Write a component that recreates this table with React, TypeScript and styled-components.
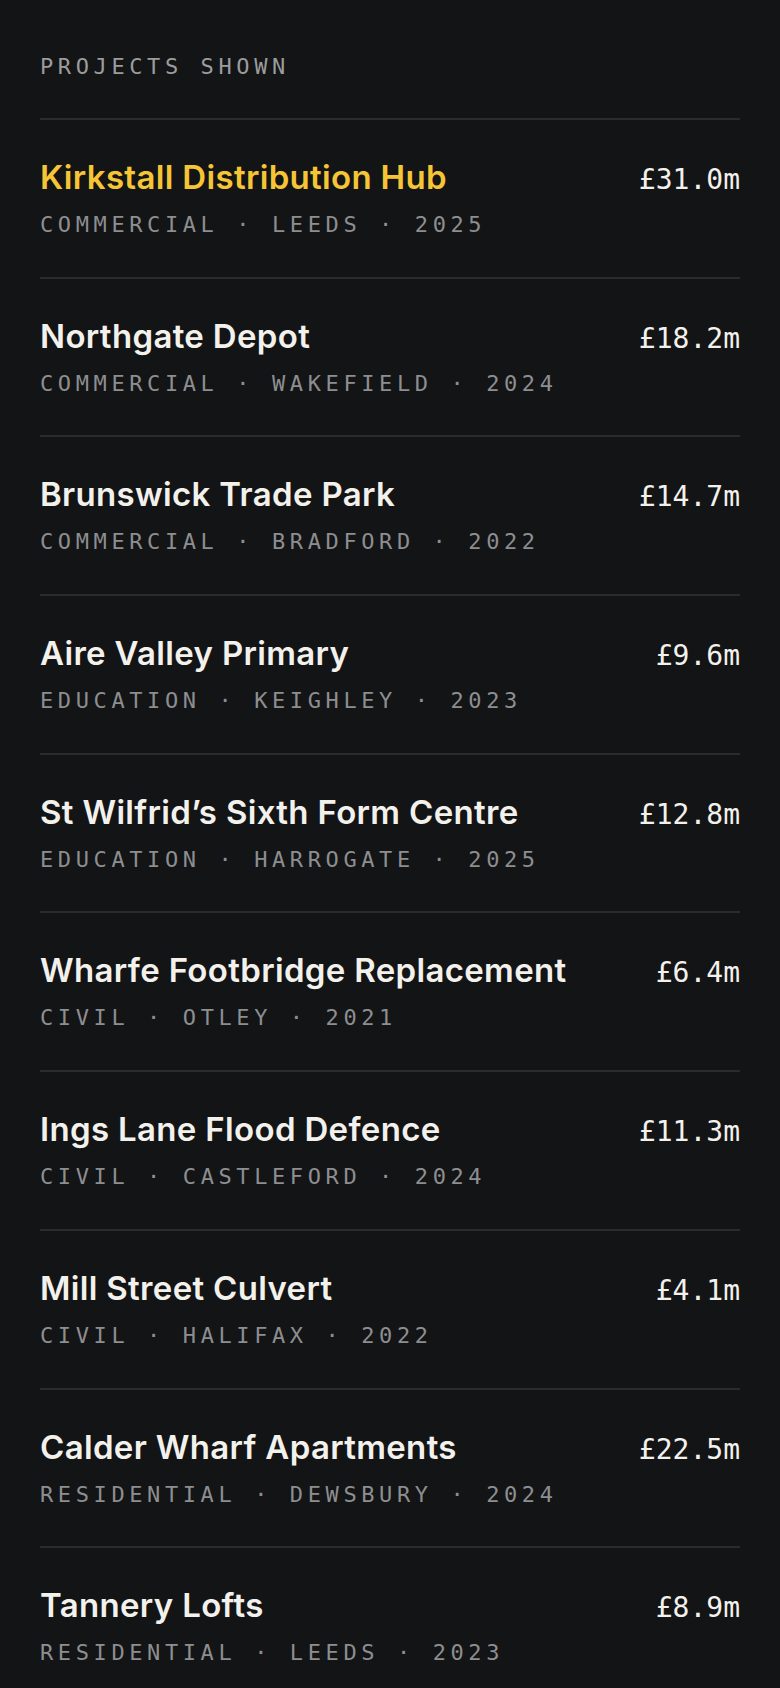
import React from "react";
import styled, { createGlobalStyle } from "styled-components";

type Project = {
    name: string;
    sector: string;
    town: string;
    year: number;
    value: string;
    active?: boolean;
};

const projects: Project[] = [
    { name: "Kirkstall Distribution Hub", sector: "Commercial", town: "Leeds", year: 2025, value: "£31.0m", active: true },
    { name: "Northgate Depot", sector: "Commercial", town: "Wakefield", year: 2024, value: "£18.2m" },
    { name: "Brunswick Trade Park", sector: "Commercial", town: "Bradford", year: 2022, value: "£14.7m" },
    { name: "Aire Valley Primary", sector: "Education", town: "Keighley", year: 2023, value: "£9.6m" },
    { name: "St Wilfrid’s Sixth Form Centre", sector: "Education", town: "Harrogate", year: 2025, value: "£12.8m" },
    { name: "Wharfe Footbridge Replacement", sector: "Civil", town: "Otley", year: 2021, value: "£6.4m" },
    { name: "Ings Lane Flood Defence", sector: "Civil", town: "Castleford", year: 2024, value: "£11.3m" },
    { name: "Mill Street Culvert", sector: "Civil", town: "Halifax", year: 2022, value: "£4.1m" },
    { name: "Calder Wharf Apartments", sector: "Residential", town: "Dewsbury", year: 2024, value: "£22.5m" },
    { name: "Tannery Lofts", sector: "Residential", town: "Leeds", year: 2023, value: "£8.9m" },
];

const GlobalStyle = createGlobalStyle`
    html, body {
        margin: 0;
        padding: 0;
        background: #131416;
    }
`;

const Mono = `"DejaVu Sans Mono", "Liberation Mono", monospace`;

const Page = styled.main`
    min-height: 100vh;
    box-sizing: border-box;
    padding: 51px 40px 40px;
    background: #131416;
`;

const Heading = styled.h2`
    margin: 0 0 35px;
    font-family: ${Mono};
    font-weight: 400;
    font-size: 22px;
    line-height: 32px;
    letter-spacing: 4.6px;
    text-transform: uppercase;
    color: #9c9c9d;
`;

const List = styled.ul`
    list-style: none;
    margin: 0;
    padding: 0;
`;

const Row = styled.li`
    display: grid;
    grid-template-columns: 1fr auto;
    align-items: baseline;
    column-gap: 24px;
    row-gap: 10px;
    padding: 38px 0 35.7px;
    border-top: 2px solid #2a2b2d;
`;

const Title = styled.h3<{ $active?: boolean }>`
    margin: 0;
    font-family: Inter, "Noto Sans", sans-serif;
    font-weight: 600;
    font-size: 33px;
    line-height: 38px;
    letter-spacing: 0.01em;
    color: ${(p) => (p.$active ? "#f5c535" : "#f3f1ec")};
`;

const Value = styled.span`
    font-family: ${Mono};
    font-size: 28px;
    line-height: 38px;
    color: #f3f1ec;
    text-align: right;
`;

const Meta = styled.div`
    grid-column: 1 / -1;
    font-family: ${Mono};
    font-size: 22px;
    line-height: 32px;
    letter-spacing: 4.6px;
    text-transform: uppercase;
    color: #8d8e90;
`;

export default function App() {
    return (
        <>
            <GlobalStyle />
            <Page>
                <Heading>Projects shown</Heading>
                <List>
                    {projects.map((p) => (
                        <Row key={p.name}>
                            <Title $active={p.active}>{p.name}</Title>
                            <Value>{p.value}</Value>
                            <Meta>
                                {p.sector} · {p.town} · {p.year}
                            </Meta>
                        </Row>
                    ))}
                </List>
            </Page>
        </>
    );
}
